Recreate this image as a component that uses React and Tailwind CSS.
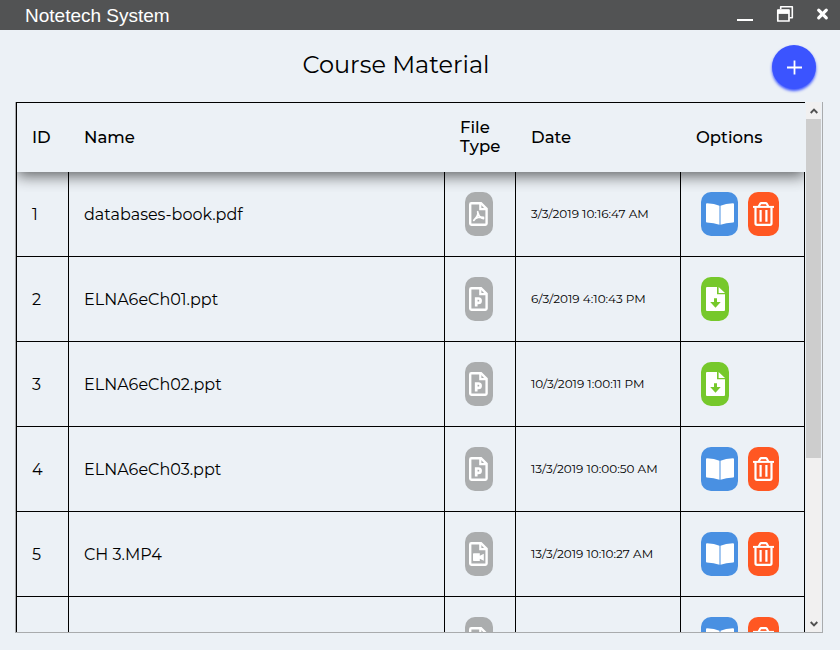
import React from "react";

const rows = [
  { id: "1", name: "databases-book.pdf", type: "pdf", date: "3/3/2019 10:16:47 AM" },
  { id: "2", name: "ELNA6eCh01.ppt", type: "ppt", date: "6/3/2019 4:10:43 PM", remote: true },
  { id: "3", name: "ELNA6eCh02.ppt", type: "ppt", date: "10/3/2019 1:00:11 PM", remote: true },
  { id: "4", name: "ELNA6eCh03.ppt", type: "ppt", date: "13/3/2019 10:00:50 AM" },
  { id: "5", name: "CH 3.MP4", type: "video", date: "13/3/2019 10:10:27 AM" },
  { id: "", name: "", type: "video", date: "" },
];

function FileIcon({ type }) {
  return (
    <svg width="19" height="24" viewBox="0 0 19 24" fill="none" stroke="#fff">
      <path d="M2.4 1.2H12L17.6 6.8V21.6Q17.6 22.8 16.4 22.8H2.4Q1.2 22.8 1.2 21.6V2.4Q1.2 1.2 2.4 1.2Z" strokeWidth="2.4" />
      <path d="M11.3 1.5V7.2H17.3" strokeWidth="2.2" />
      {type === "pdf" && (
        <path d="M8.7 9.8C9.6 12 8.5 14.5 4.8 18.3M9.2 11.5C9.8 14.2 11.5 16 14.5 16.6M6.4 16.6C8.4 15.3 11.5 14.8 14.5 15.3" strokeWidth="1.8" strokeLinecap="round" />
      )}
      {type === "ppt" && <path d="M7.2 19.5V11.5H9.5Q11.6 11.5 11.6 13.7Q11.6 15.9 9.5 15.9H7.2" strokeWidth="2.7" />}
      {type === "video" && <path d="M4.7 11.3H10.8V13.7L14.8 11.7V18.7L10.8 16.7V18.9H4.7Q4 18.9 4 18.2V12Q4 11.3 4.7 11.3Z" fill="#fff" stroke="none" />}
    </svg>
  );
}

function BookIcon() {
  return (
    <svg width="28" height="22" viewBox="0 0 28 22" fill="#fff">
      <path d="M0 1.2Q0 .2 1 .2Q8.5 .3 13.5 2.7V21.7Q8 19.5 .8 19.4Q0 19.4 0 18.5Z" />
      <path d="M28 1.2Q28 .2 27 .2Q19.5 .3 14.5 2.7V21.7Q20 19.5 27.2 19.4Q28 19.4 28 18.5Z" />
    </svg>
  );
}

function TrashIcon() {
  return (
    <svg width="21" height="24" viewBox="0 0 21 24" fill="none" stroke="#fff">
      <path d="M0 4.9H21" strokeWidth="2" />
      <path d="M5.7 4.5L7.3 1.6Q7.6 1.1 8.3 1.1H12.7Q13.4 1.1 13.7 1.6L15.3 4.5" strokeWidth="2.1" />
      <path d="M2.5 5.2V21.3Q2.5 22.8 4 22.8H17Q18.5 22.8 18.5 21.3V5.2" strokeWidth="2.2" />
      <path d="M7.6 8V19.8M13.4 8V19.8" strokeWidth="2.2" />
    </svg>
  );
}

function DownloadIcon() {
  return (
    <svg width="19" height="24" viewBox="0 0 19 24">
      <path d="M1 0H11V7.2H19V23Q19 24 18 24H1Q0 24 0 23V1Q0 0 1 0Z" fill="#fff" />
      <path d="M12.6 0L19 5.9H12.6Z" fill="#fff" />
      <path d="M8 11.3H11V15H14.7L9.5 20.7L4.2 15H8Z" fill="#76c82b" />
    </svg>
  );
}

function Row({ row }) {
  return (
    <div className="grid h-[85px] shrink-0 grid-cols-[52px_376px_71px_165px_124px] [&>*]:border-r [&>*]:border-b [&>*]:border-black">
      <div className="flex items-center pt-0.5 pl-[15px] text-[16px]">{row.id}</div>
      <div className="flex items-center pt-0.5 pl-[15px] text-[16px]">{row.name}</div>
      <div className="flex items-center pl-5">
        <div className="flex h-11 w-7 items-center rounded-[10px] bg-[#abadae] pl-1">
          <FileIcon type={row.type} />
        </div>
      </div>
      <div className="flex items-center pl-[15px] text-[12px] whitespace-nowrap">{row.date}</div>
      <div className="flex items-center gap-2.5 pl-5">
        {row.remote ? (
          <button className="flex h-11 w-7 items-center rounded-[10px] bg-[#76c82b] pl-[5px]"><DownloadIcon /></button>
        ) : (
          <>
            <button className="flex h-11 w-[37px] items-center rounded-[10px] bg-[#4990e2] pl-[5px]"><BookIcon /></button>
            <button className="flex h-11 w-[31px] items-center rounded-[10px] bg-[#ff5722] pl-[5px]"><TrashIcon /></button>
          </>
        )}
      </div>
    </div>
  );
}

export default function App() {
  return (
    <div className="flex h-[650px] w-[840px] flex-col overflow-hidden bg-[#ecf1f6] font-['Montserrat','Inter',sans-serif] text-black">
      <header className="flex h-[30px] shrink-0 items-center justify-between bg-[#525354] pr-[11px] pl-[25px] text-white">
        <span className="pt-0.5 font-['Liberation_Sans',sans-serif] text-[19px] leading-[28px]">Notetech System</span>
        <svg width="92" height="30" viewBox="0 0 92 30" fill="none" stroke="#fff">
          <path d="M0 20H16" strokeWidth="2" />
          <path d="M43.7 9V6.8H55.3V17.7H52.5" strokeWidth="1.6" strokeLinejoin="round" />
          <path d="M40.8 10H52V21H40.8Z" strokeWidth="1.7" strokeLinejoin="round" />
          <path d="M41 11.8H52" strokeWidth="4.2" />
          <path d="M81.7 10.2L89.3 17.8M89.3 10.2L81.7 17.8" strokeWidth="3.2" strokeLinecap="round" />
        </svg>
      </header>
      <div className="grid h-[72px] shrink-0 grid-cols-[1fr_auto_1fr] items-start pr-6 pl-[5px]">
        <span />
        <h1 className="mt-[17px] ml-[-29px] text-[24px] leading-9 font-normal whitespace-nowrap">Course Material</h1>
        <button className="mt-[15px] flex size-11 items-center justify-center justify-self-end rounded-full bg-[#3b54ff] shadow-[0_2px_3px_#3b54ff]">
          <svg width="15" height="15" viewBox="0 0 15 15" stroke="#fff" strokeWidth="1.8" className="mt-px">
            <path d="M0 7.5H15M7.5 .5V14.5" />
          </svg>
        </button>
      </div>
      <main className="ml-[15px] flex h-[531px] w-[808px] shrink-0 overflow-hidden border-r border-b border-l border-[#a9abad]">
        <section className="flex w-[789px] flex-col overflow-hidden border-l border-black">
          <div className="z-10 h-[70px] w-[788px] shrink-0 [clip-path:inset(0_0_-20px_0)]">
            <div className="grid h-[70px] grid-cols-[52px_376px_71px_165px_124px] items-center border-t border-black bg-[#ecf1f6] text-[16.5px] leading-[19px] font-medium shadow-[0_4px_14px_rgba(0,0,0,0.6)] [&>*]:pl-[15px]">
              <div>ID</div>
              <div>Name</div>
              <div className="pb-0.5">File<br />Type</div>
              <div>Date</div>
              <div>Options</div>
            </div>
          </div>
          {rows.map((row, i) => <Row key={i} row={row} />)}
        </section>
        <aside className="ml-px flex w-[15px] flex-col bg-[#f1f0f0]">
          <div className="flex h-[17px] shrink-0 items-center justify-center">
            <svg width="8" height="6" viewBox="0 0 8 6" fill="none" stroke="#505050" strokeWidth="1.9"><path d="M.7 5L4 1.7L7.3 5" /></svg>
          </div>
          <div className="h-[339px] shrink-0 bg-[#cdcdcd]" />
          <div className="flex flex-1 items-end justify-center pb-[5px]">
            <svg width="8" height="6" viewBox="0 0 8 6" fill="none" stroke="#505050" strokeWidth="1.9"><path d="M.7 1L4 4.3L7.3 1" /></svg>
          </div>
        </aside>
      </main>
    </div>
  );
}
